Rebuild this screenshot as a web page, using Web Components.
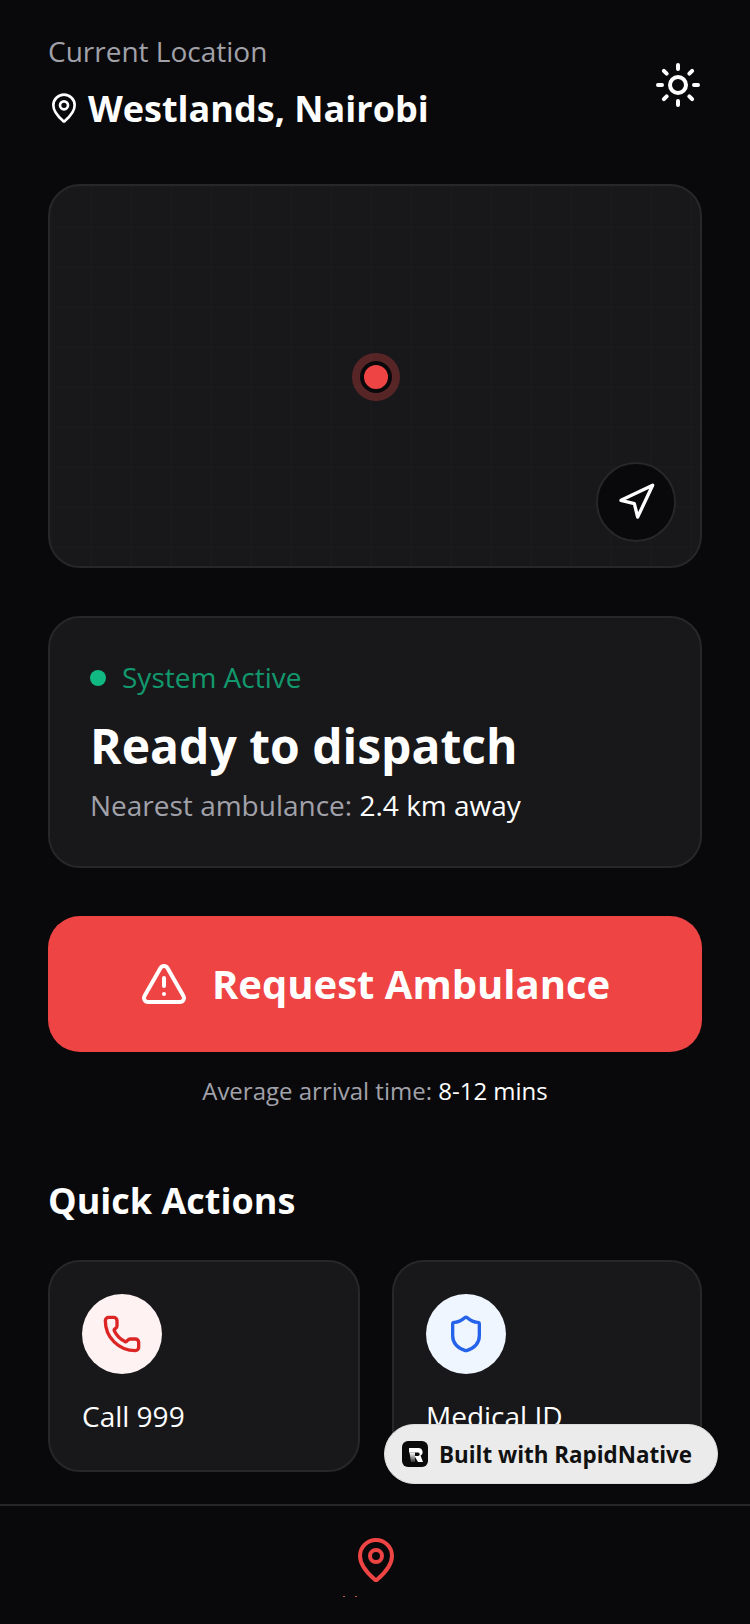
<!DOCTYPE html>
<html><head><meta charset="utf-8"><style>
html,body{margin:0;padding:0;background:#09090b;}
body{width:750px;height:1624px;overflow:hidden;font-family:"Open Sans","Noto Sans",sans-serif;}
</style></head><body>
<app-screen></app-screen>
<script>
const ic=(s,sw,c,inner)=>`<svg width="${s}" height="${s}" viewBox="0 0 24 24" fill="none" stroke="${c}" stroke-width="${sw}" stroke-linecap="round" stroke-linejoin="round" style="display:block;flex:none">${inner}</svg>`;
const PIN='<path d="M20 10c0 4.993-5.539 10.193-7.399 11.799a1 1 0 0 1-1.202 0C9.539 20.193 4 14.993 4 10a8 8 0 0 1 16 0"/><circle cx="12" cy="10" r="3"/>';
const SUN='<circle cx="12" cy="12" r="4"/><path d="M12 2v2M12 20v2M4.93 4.93l1.41 1.41M17.66 17.66l1.41 1.41M2 12h2M20 12h2M6.34 17.66l-1.41 1.41M19.07 4.93l-1.41 1.41"/>';
const NAV='<polygon points="3 11 22 2 13 21 11 13 3 11"/>';
const WARN='<path d="m21.73 18-8-14a2 2 0 0 0-3.48 0l-8 14A2 2 0 0 0 4 21h16a2 2 0 0 0 1.73-3"/><path d="M12 9v4M12 17h.01"/>';
const PHONE='<path d="M13.832 16.568a1 1 0 0 0 1.213-.303l.355-.465A2 2 0 0 1 17 15h3a2 2 0 0 1 2 2v3a2 2 0 0 1-2 2A18 18 0 0 1 2 4a2 2 0 0 1 2-2h3a2 2 0 0 1 2 2v3a2 2 0 0 1-.8 1.6l-.468.351a1 1 0 0 0-.292 1.233 14 14 0 0 0 6.392 6.384"/>';
const SHIELD='<path d="M20 13c0 5-3.5 7.5-7.66 8.95a1 1 0 0 1-.67-.01C7.5 20.5 4 18 4 13V6a1 1 0 0 1 1-1c2 0 4.5-1.2 6.24-2.72a1.17 1.17 0 0 1 1.52 0C14.51 3.81 17 5 19 5a1 1 0 0 1 1 1z"/>';
function def(name,html){customElements.define(name,class extends HTMLElement{constructor(){super();this.attachShadow({mode:'open'}).innerHTML=html;}});}

def('loc-header',`<style>
:host{display:flex;justify-content:space-between;height:184px;padding:31px 0 0;box-sizing:border-box;align-items:flex-start}
.l{font-size:28px;line-height:40px;color:#a1a1aa}
.r{display:flex;align-items:center;gap:8px;margin-top:11px;height:52px;color:#fff;font-weight:700;font-size:36px}
.s{margin:30px 0 0}
</style><div><div class="l">Current Location</div><div class="r">${ic(32,2,'#fff',PIN)}<span>Westlands, Nairobi</span></div></div><div class="s">${ic(48,2,'#fff',SUN)}</div>`);

def('map-card',`<style>
:host{display:block;position:relative;height:384px;box-sizing:border-box;border:2px solid #27272a;border-radius:32px;background-color:#18181b;background-image:linear-gradient(#1a1a1d 2px,transparent 2px),linear-gradient(90deg,#1a1a1d 2px,transparent 2px);background-size:40px 40px;overflow:hidden}
.c{position:absolute;left:302px;top:167px;width:48px;height:48px;border-radius:50%;background:rgba(239,68,68,.3);display:flex;align-items:center;justify-content:center}
.d{width:24px;height:24px;border:4px solid #09090b;border-radius:50%;background:#ef4444;box-sizing:content-box}
.b{position:absolute;right:24px;bottom:24px;width:80px;height:80px;box-sizing:border-box;border-radius:50%;background:#09090b;border:2px solid #27272a;display:flex;align-items:center;justify-content:center}
</style><div class="c"><div class="d"></div></div><div class="b">${ic(40,2,'#fff',NAV)}</div>`);

def('status-card',`<style>
:host{display:block;box-sizing:border-box;height:252px;margin-top:48px;padding:39px 40px 40px;border:2px solid #27272a;border-radius:32px;background:#18181b}
.a{display:flex;align-items:center;gap:16px;height:40px;color:#10b981;font-size:28px;line-height:40px}
.a span{opacity:.8}
.a i{width:16px;height:16px;border-radius:50%;background:#10b981;display:block;position:relative;top:1px}
h2{margin:17px 0 0;color:#fff;font-size:48px;line-height:64px;font-weight:700}
.n{margin-top:7px;font-size:28px;line-height:40px;color:#a1a1aa}.n b{font-weight:400;color:#fff}
</style><div class="a"><i></i><span>System Active</span></div><h2>Ready to dispatch</h2><div class="n">Nearest ambulance: <b>2.4 km away</b></div>`);

def('request-button',`<style>
:host{display:flex;align-items:center;justify-content:center;gap:24px;height:136px;margin-top:48px;border-radius:32px;background:#ef4444;color:#fff;font-size:40px;font-weight:700}
span{position:relative;top:-1px}
</style>${ic(48,2,'#fff',WARN)}<span>Request Ambulance</span>`);

def('arrival-note',`<style>
:host{display:block;text-align:center;margin-top:23px;font-size:24px;line-height:32px;color:#a1a1aa}b{font-weight:400;color:#fff}
</style>Average arrival time: <b>8-12 mins</b>`);

def('section-title',`<style>
:host{display:block;margin-top:70px;color:#fff;font-size:36px;line-height:48px;font-weight:700}
</style><slot></slot>`);

def('action-card',`<style>
:host{display:block;box-sizing:border-box;height:212px;padding:32px;border:2px solid #27272a;border-radius:32px;background:#18181b;color:#fff;font-size:28px;line-height:40px}
.i{width:80px;height:80px;border-radius:50%;display:flex;align-items:center;justify-content:center;background:var(--bg);margin-bottom:22px}
</style><div class="i"><slot name="icon"></slot></div><slot></slot>`);

def('made-badge',`<style>
:host{position:absolute;left:384px;top:1424px;width:334px;height:60px;box-sizing:border-box;border-radius:30px;background:#ebebeb;border:1px solid #dcdcdc;display:flex;align-items:center;gap:11px;padding-left:17px;color:#111;font-size:22.4px;font-weight:700;white-space:nowrap;box-shadow:0 1px 2px rgba(0,0,0,.2)}
.r{width:26px;height:26px;border-radius:6px;background:#0a0a0a;flex:none}
svg{display:block}
</style><div class="r"><svg width="26" height="26" viewBox="0 0 26 26"><defs><linearGradient id="f" x1="0" y1="0" x2="0" y2="1"><stop offset="0" stop-color="#fff"/><stop offset="1" stop-color="#333"/></linearGradient></defs><path d="M7 7h9.500a4 4 0 0 1 2 7.500L21 21h-5l-3.500-6H16a1.700 1.700 0 0 0 0-3.400H7z" fill="#fff"/><path d="M7.500 11.600H13V21H9z" fill="url(#f)"/></svg></div><span>Built with RapidNative</span>`);

def('tab-bar',`<style>
:host{display:block;height:120px;box-sizing:border-box;border-top:2px solid #27272a;background:#09090b;position:relative;overflow:hidden}
.p{display:flex;justify-content:center;padding-top:30px;padding-left:2px}
.t{display:flex;gap:10px;justify-content:center;margin:12px 0 0 -51px}
.t i{display:block;width:2px;height:1px;background:#c9584e}
</style><div class="p">${ic(48,2,'#ef4444',PIN)}</div><div class="t"><i></i><i></i></div>`);

def('app-screen',`<style>
:host{display:flex;flex-direction:column;width:750px;height:1624px;position:relative;overflow:hidden;background:#09090b;color:#fff}
.m{height:1504px;overflow:hidden;padding:0 48px;box-sizing:border-box;flex:none}
.g{display:grid;grid-template-columns:312px 310px;gap:32px;margin-top:35px}
</style><div class="m"><loc-header></loc-header><map-card></map-card><status-card></status-card><request-button></request-button><arrival-note></arrival-note><section-title>Quick Actions</section-title>
<div class="g"><action-card style="--bg:#fef2f2"><span slot="icon">${ic(40,2,'#dc2626',PHONE)}</span>Call 999</action-card><action-card style="--bg:#eff6ff"><span slot="icon">${ic(40,2,'#2563eb',SHIELD)}</span>Medical ID</action-card></div></div><tab-bar></tab-bar><made-badge></made-badge>`);
</script></body></html>
